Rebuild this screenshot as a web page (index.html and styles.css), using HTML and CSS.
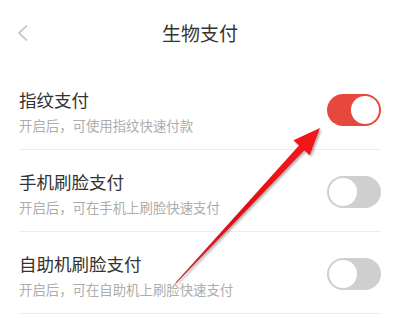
FILE: index.html
```html
<!DOCTYPE html>
<html lang="zh">
<head>
<meta charset="utf-8">
<link rel="stylesheet" href="styles.css">
</head>
<body>
<div class="page">
  <header class="header">
    <div class="back">
      <svg width="13" height="18" viewBox="0 0 13 18"><path d="M11 1.5 L3 9 L11 16.5" fill="none" stroke="#c2c2c2" stroke-width="1.7"/></svg>
    </div>
    <h1 class="title">生物支付</h1>
    <div></div>
  </header>
  <ul class="list">
    <li class="row">
      <div class="text">
        <div class="name">指纹支付</div>
        <div class="desc">开启后，可使用指纹快速付款</div>
      </div>
      <div class="switch on"><span class="knob"></span></div>
    </li>
    <li class="row">
      <div class="text">
        <div class="name">手机刷脸支付</div>
        <div class="desc">开启后，可在手机上刷脸快速支付</div>
      </div>
      <div class="switch"><span class="knob"></span></div>
    </li>
    <li class="row">
      <div class="text">
        <div class="name">自助机刷脸支付</div>
        <div class="desc">开启后，可在自助机上刷脸快速支付</div>
      </div>
      <div class="switch"><span class="knob"></span></div>
    </li>
  </ul>
  <svg class="arrow" width="400" height="318" viewBox="0 0 400 318">
    <defs>
      <filter id="sh" x="-20%" y="-20%" width="140%" height="140%">
        <feDropShadow dx="1.5" dy="1.5" stdDeviation="1.2" flood-color="#000" flood-opacity="0.35"/>
      </filter>
      <linearGradient id="g" x1="176" y1="283" x2="320" y2="128" gradientUnits="userSpaceOnUse">
        <stop offset="0" stop-color="#c0303a"/>
        <stop offset="0.4" stop-color="#e01018"/>
        <stop offset="1" stop-color="#f5141a"/>
      </linearGradient>
    </defs>
    <polygon filter="url(#sh)" fill="url(#g)" points="176,283.5 304.2,150.2 309.7,155.3 320,128 293.5,140.3 299,145.4 175.6,282.5"/>
  </svg>
</div>
</body>
</html>
```
FILE: styles.css
```css
* { box-sizing: border-box; }
html, body { margin: 0; padding: 0; background: #fff; }
body {
  font-family: "Noto Sans CJK SC", "Noto Sans", sans-serif;
  width: 400px;
  height: 318px;
  overflow: hidden;
}
.page { position: relative; width: 400px; height: 318px; }
.header {
  height: 66px;
  margin-bottom: 2px;
  display: grid;
  grid-template-columns: 1fr auto 1fr;
  align-items: center;
}
.back { padding-left: 16px; display: flex; align-items: center; }
.back svg { display: block; }
.title {
  margin: 0;
  font-size: 19px;
  font-weight: 400;
  color: #333;
  line-height: 24px;
}
.list { list-style: none; margin: 0 19px 0 19px; padding: 0; }
.row {
  height: 82px;
  padding: 20px 0 15px;
  border-bottom: 1px solid #ececec;
  display: flex;
  justify-content: space-between;
  align-items: flex-start;
}
.name { font-size: 17.5px; line-height: 24px; color: #333; }
.desc { font-size: 13.4px; line-height: 18px; color: #adadad; margin-top: 4px; }
.switch {
  margin-top: 6px;
  width: 54px;
  height: 32px;
  border-radius: 16px;
  background: #cfcfcf;
  position: relative;
}
.switch .knob {
  position: absolute;
  top: 2px;
  left: 2px;
  width: 28px;
  height: 28px;
  border-radius: 50%;
  background: #fff;
}
.switch.on { background: #e8473d; }
.switch.on .knob { left: 24px; }
.arrow { position: absolute; left: 0; top: 0; pointer-events: none; }
```
